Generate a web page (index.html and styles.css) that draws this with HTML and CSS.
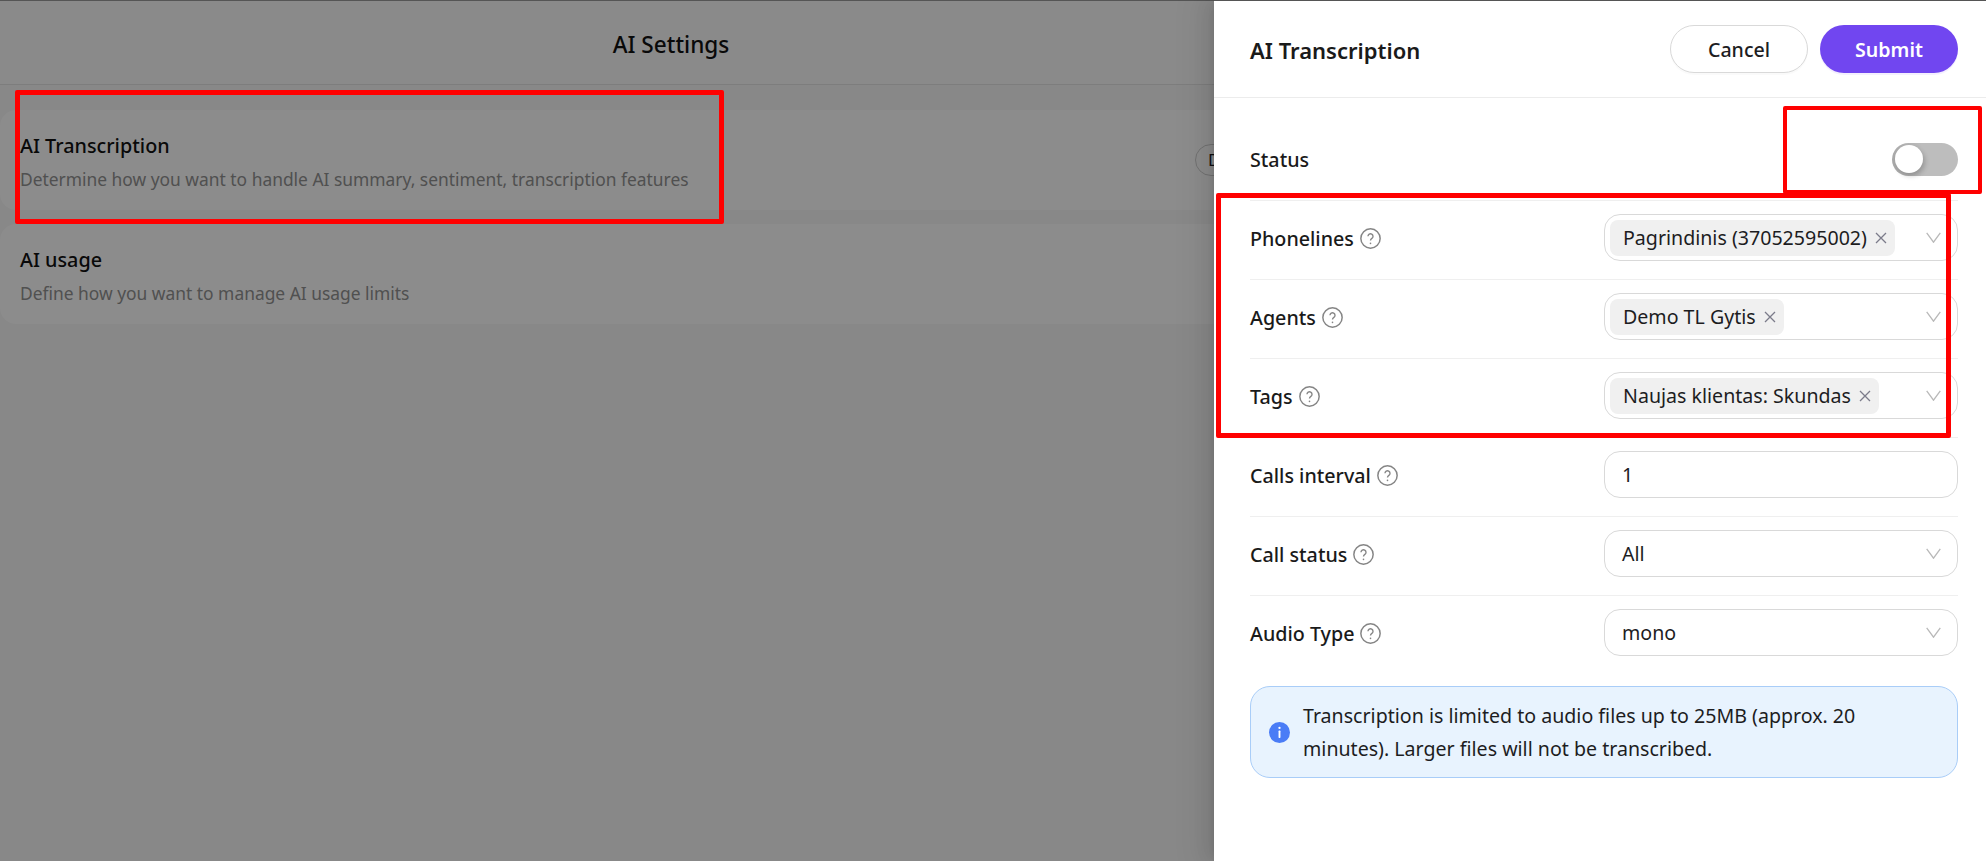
FILE: index.html
```html
<!DOCTYPE html>
<html lang="en">
<head>
<meta charset="utf-8">
<title>AI Settings</title>
<link rel="stylesheet" href="styles.css">
</head>
<body>
<svg class="defs" width="0" height="0" aria-hidden="true">
  <symbol id="help" viewBox="0 0 20 20"><circle cx="10" cy="10" r="9.2" fill="none" stroke="#858585" stroke-width="1.4"/><path d="M7.6 7.9a2.4 2.4 0 1 1 3.7 2c-.9.6-1.3 1-1.3 2.1" fill="none" stroke="#858585" stroke-width="1.3"/><circle cx="10" cy="14.6" r=".8" fill="#858585"/></symbol>
  <symbol id="chev" viewBox="0 0 15 11"><path d="M.7 .8 7.5 10.2 14.3 .8" fill="none" stroke="#b9b9b9" stroke-width="1.3"/></symbol>
  <symbol id="x" viewBox="0 0 12 12"><path d="M1 1l10 10M11 1 1 11" fill="none" stroke="#7b7b8a" stroke-width="1.3"/></symbol>
</svg>
<div class="page">
  <header class="page-head">AI Settings</header>
  <section class="cards">
    <div class="card">
      <div class="card-text">
        <div class="card-title">AI Transcription</div>
        <div class="card-desc">Determine how you want to handle AI summary, sentiment, transcription features</div>
      </div>
      <span class="pill">D</span>
    </div>
    <div class="card">
      <div class="card-text">
        <div class="card-title">AI usage</div>
        <div class="card-desc">Define how you want to manage AI usage limits</div>
      </div>
    </div>
  </section>
</div>
<div class="overlay"></div>
<aside class="drawer">
  <div class="drawer-head">
    <div class="drawer-title">AI Transcription</div>
    <div class="drawer-actions">
      <button class="btn btn-cancel">Cancel</button>
      <button class="btn btn-submit">Submit</button>
    </div>
  </div>
  <div class="drawer-body">
    <div class="row row-status">
      <span class="label">Status</span>
      <span class="toggle"><span class="knob"></span></span>
    </div>
    <div class="row">
      <span class="label">Phonelines <svg class="help"><use href="#help"/></svg></span>
      <div class="field">
        <span class="chip">Pagrindinis (37052595002) <svg class="chip-x"><use href="#x"/></svg></span>
        <svg class="chev"><use href="#chev"/></svg>
      </div>
    </div>
    <div class="row">
      <span class="label">Agents <svg class="help"><use href="#help"/></svg></span>
      <div class="field">
        <span class="chip">Demo TL Gytis <svg class="chip-x"><use href="#x"/></svg></span>
        <svg class="chev"><use href="#chev"/></svg>
      </div>
    </div>
    <div class="row">
      <span class="label">Tags <svg class="help"><use href="#help"/></svg></span>
      <div class="field">
        <span class="chip">Naujas klientas: Skundas <svg class="chip-x"><use href="#x"/></svg></span>
        <svg class="chev"><use href="#chev"/></svg>
      </div>
    </div>
    <div class="row">
      <span class="label">Calls interval <svg class="help"><use href="#help"/></svg></span>
      <div class="field field-plain"><span class="value">1</span></div>
    </div>
    <div class="row">
      <span class="label">Call status <svg class="help"><use href="#help"/></svg></span>
      <div class="field field-plain"><span class="value">All</span><svg class="chev"><use href="#chev"/></svg></div>
    </div>
    <div class="row row-last">
      <span class="label">Audio Type <svg class="help"><use href="#help"/></svg></span>
      <div class="field field-plain"><span class="value">mono</span><svg class="chev"><use href="#chev"/></svg></div>
    </div>
    <div class="alert">
      <svg class="alert-icon" viewBox="0 0 20 20"><circle cx="10" cy="10" r="10" fill="#4a7cf6"/><circle cx="10" cy="5.6" r="1.1" fill="#fff"/><rect x="9.1" y="8.2" width="1.8" height="7" rx=".6" fill="#fff"/></svg>
      <div class="alert-text">Transcription is limited to audio files up to 25MB (approx. 20 minutes). Larger files will not be transcribed.</div>
    </div>
  </div>
</aside>
<div class="mark mark-a"></div>
<div class="mark mark-b"></div>
<div class="mark mark-c"></div>
</body>
</html>
```
FILE: styles.css
```css
* { box-sizing: border-box; }
html, body { height: 100%; }
body {
  margin: 0;
  width: 1986px;
  height: 861px;
  overflow: hidden;
  position: relative;
  background: #f7f7f7;
  font-family: "Noto Sans", "Open Sans", sans-serif;
  font-size: 19.6px;
  color: #1d1d1f;
}
.defs { position: absolute; }
.page { height: 100%; }
.page-head {
  height: 85px;
  padding: 5px 644px 0 0;
  display: flex;
  align-items: center;
  justify-content: center;
  border-bottom: 1px solid #e3e3e3;
  background: #fcfcfc;
  font-size: 22.6px;
  font-weight: 500;
  color: #111;
}
.cards { padding: 25px 0 0; display: flex; flex-direction: column; gap: 14px; }
.card {
  height: 100px;
  padding: 2px 20px 0;
  display: flex;
  align-items: center;
  justify-content: space-between;
  background: #ffffff;
  border-radius: 16px;
}
.card-title { font-size: 19.8px; font-weight: 500; color: #111; line-height: 28px; }
.card-desc { font-size: 17.4px; color: #929292; line-height: 24px; margin-top: 7px; }
.pill {
  position: absolute;
  left: 1195px;
  top: 144px;
  width: 40px;
  height: 32px;
  padding: 0 12px;
  line-height: 30px;
  border: 1px solid #d0d0d0;
  border-radius: 16px;
  font-size: 17px;
}
.overlay { position: absolute; inset: 0; background: rgba(0, 0, 0, 0.45); border-top: 1px solid #555; }
.drawer {
  position: absolute;
  top: 0;
  right: 0;
  bottom: 0;
  width: 772px;
  background: #fff;
  box-shadow: -6px 0 16px rgba(0, 0, 0, 0.08), -3px 0 6px -4px rgba(0, 0, 0, 0.12), -9px 0 28px 8px rgba(0, 0, 0, 0.05);
  border-top: 1px solid #555;
}
.drawer-head {
  height: 97px;
  padding: 24px 28px 0 36px;
  display: flex;
  justify-content: space-between;
  align-items: flex-start;
  border-bottom: 1px solid #ececec;
}
.drawer-title { font-size: 22px; font-weight: 600; line-height: 50px; color: #1a1a1a; }
.drawer-actions { display: flex; gap: 12px; }
.btn {
  width: 138px;
  height: 48px;
  border-radius: 24px;
  font-family: inherit;
  font-size: 19.6px;
  font-weight: 500;
  cursor: pointer;
}
.btn-cancel { background: #fff; border: 1px solid #d9d9d9; color: #1d1d1f; box-shadow: 0 2px 0 rgba(0,0,0,.02); }
.btn-submit { background: #7146f0; border: 0; color: #fff; font-weight: 600; box-shadow: 0 2px 0 rgba(113,70,240,.08); }
.drawer-body { padding: 0 28px 0 36px; }
.row {
  height: 79px;
  padding-top: 13px;
  display: flex;
  justify-content: space-between;
  align-items: flex-start;
  border-bottom: 1px solid #efefef;
}
.row-status { height: 103px; padding: 22px 0 1px; align-items: center; }
.row-last { border-bottom: 0; height: 90px; }
.label {
  display: flex;
  align-items: center;
  gap: 6px;
  height: 48px;
  font-weight: 500;
  font-size: 19.7px;
  color: #1a1a1a;
}
.help { width: 21px; height: 21px; }
.toggle {
  width: 66px;
  height: 33px;
  border-radius: 17px;
  background: linear-gradient(90deg, #a9a9a9 0, #bdbdbd 30px);
  padding: 2px 3px;
  display: block;
}
.knob {
  display: block;
  width: 28px;
  height: 28px;
  border-radius: 50%;
  background: #fff;
  box-shadow: 2px 3px 5px rgba(0,0,0,.2);
}
.field {
  position: relative;
  width: 354px;
  height: 47px;
  border: 1px solid #d9d9d9;
  border-radius: 16px;
  padding: 4px 5px;
  display: flex;
  align-items: center;
  background: #fff;
}
.field-plain { padding: 0 17px; }
.chip {
  height: 36px;
  padding: 0 8px 0 13px;
  display: inline-flex;
  align-items: center;
  gap: 8px;
  border-radius: 8px;
  background: #f0f0f0;
  font-size: 19.6px;
  white-space: nowrap;
}
.chip-x { width: 12px; height: 12px; }
.value { font-size: 19.6px; }
.chev { position: absolute; right: 16px; top: 17px; width: 15px; height: 11px; }
.alert {
  height: 92px;
  padding: 0 28px 0 18px;
  display: flex;
  align-items: center;
  gap: 13px;
  background: #e8f3fe;
  border: 1px solid #a9cdf8;
  border-radius: 20px;
}
.alert-icon { width: 21px; height: 21px; flex: none; }
.alert-text { font-size: 19.6px; line-height: 33px; color: #1d1d1f; }
.mark { position: absolute; border: 5px solid #f00; border-radius: 2px; }
.mark-a { left: 15px; top: 90px; width: 709px; height: 134px; }
.mark-b { left: 1783px; top: 106px; width: 199px; height: 88px; border-width: 4px; }
.mark-c { left: 1216px; top: 193px; width: 735px; height: 245px; }
```
